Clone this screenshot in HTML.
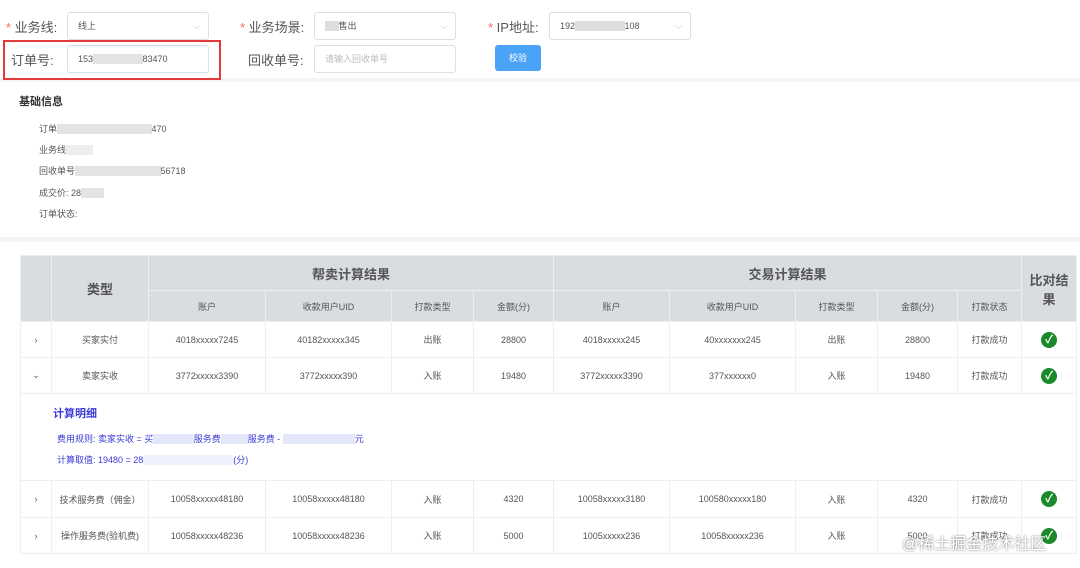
<!DOCTYPE html>
<html><head><meta charset="utf-8"><style>
body{margin:0;width:1080px;height:568px;background:#fff;font-family:"Liberation Sans","Noto Sans CJK SC",sans-serif;color:#444;position:relative;overflow:hidden}
.a{position:absolute;white-space:nowrap}
.lbl{font-size:13px;color:#555}
.inp{position:absolute;border:1px solid #dcdfe6;border-radius:3px;height:28px;box-sizing:border-box;font-size:9px;color:#555;line-height:26px;padding-left:10px}
.car{position:absolute;right:8px;top:0;color:#bbb;font-size:9px}
table{position:absolute;left:20px;top:255px;width:1056px;border-collapse:collapse;font-size:9px;color:#555;table-layout:fixed}
td,th{border:1px solid #eceef2;text-align:center;padding:0}
th{background:#d9dce0;font-weight:normal;color:#555}
.ok{display:inline-block;width:16px;height:16px;border-radius:50%;background:#1a8a2a;color:#fff;font-size:11px;line-height:16px;font-weight:bold}
.info{font-size:9px;color:#555}
.blue{color:#3b3bd6}
</style></head><body>
<div class="a lbl" style="left:6px;top:17px"><span style="color:#f56c6c">*</span> 业务线:</div>
<div class="inp" style="left:67px;top:12px;width:142px">线上<span class="car">⌵</span></div>
<div class="a lbl" style="left:240px;top:17px"><span style="color:#f56c6c">*</span> 业务场景:</div>
<div class="inp" style="left:314px;top:12px;width:142px"><span style="background:#ddd;color:#ddd">xxx</span>售出<span class="car">⌵</span></div>
<div class="a lbl" style="left:488px;top:17px"><span style="color:#f56c6c">*</span> IP地址:</div>
<div class="inp" style="left:549px;top:12px;width:142px">192<span style="background:#ddd;color:#ddd">xxxxxxxxxxx</span>108<span class="car">⌵</span></div>
<div class="a lbl" style="left:11px;top:50px">订单号:</div>
<div class="inp" style="left:67px;top:45px;width:142px">153<span style="background:#e3e3e3;color:#e3e3e3">xxxxxxxxxxx</span>83470</div>
<div class="a lbl" style="left:248px;top:50px">回收单号:</div>
<div class="inp" style="left:314px;top:45px;width:142px;color:#bbb">请输入回收单号</div>
<div class="a" style="left:495px;top:45px;width:46px;height:26px;background:#4aa3f7;border-radius:3px;color:#fff;font-size:9px;text-align:center;line-height:26px">校验</div>
<div class="a" style="left:0;top:78px;width:1080px;height:4px;background:#f3f4f6"></div>
<div class="a" style="left:3px;top:40px;width:218px;height:40px;border:2px solid #e03a3a;box-sizing:border-box"></div>
<div class="a" style="left:19px;top:93px;font-size:11px;font-weight:bold;color:#333">基础信息</div>
<div class="a info" style="left:39px;top:122px">订单<span style="background:#e3e3e3;color:#e3e3e3">xxxxxxxxxxxxxxxxxxxxx</span>470</div>
<div class="a info" style="left:39px;top:143px">业务线<span style="background:#eee;color:#eee">xxxxxx</span></div>
<div class="a info" style="left:39px;top:164px">回收单号<span style="background:#e3e3e3;color:#e3e3e3">xxxxxxxxxxxxxxxxxxx</span>56718</div>
<div class="a info" style="left:39px;top:186px">成交价: 28<span style="background:#e3e3e3;color:#e3e3e3">xxxxx</span></div>
<div class="a info" style="left:39px;top:207px">订单状态:</div>
<div class="a" style="left:0;top:237px;width:1080px;height:5px;background:#f3f4f6"></div>
<table>
<colgroup><col style="width:31px"><col style="width:97px"><col style="width:117px"><col style="width:126px"><col style="width:82px"><col style="width:80px"><col style="width:116px"><col style="width:126px"><col style="width:82px"><col style="width:80px"><col style="width:64px"><col style="width:55px"></colgroup>
<tr style="height:35px"><th rowspan="2"></th><th rowspan="2" style="font-size:13px;font-weight:bold">类型</th><th colspan="4" style="font-size:13px;font-weight:bold">帮卖计算结果</th><th colspan="5" style="font-size:13px;font-weight:bold">交易计算结果</th><th rowspan="2" style="font-size:13px;font-weight:bold">比对结<br>果</th></tr>
<tr style="height:31px"><th>账户</th><th>收款用户UID</th><th>打款类型</th><th>金额(分)</th><th>账户</th><th>收款用户UID</th><th>打款类型</th><th>金额(分)</th><th>打款状态</th></tr>
<tr style="height:36px"><td>›</td><td>买家实付</td><td>4018xxxxx7245</td><td>40182xxxxx345</td><td>出账</td><td>28800</td><td>4018xxxxx245</td><td>40xxxxxxx245</td><td>出账</td><td>28800</td><td>打款成功</td><td><span class="ok">✓</span></td></tr>
<tr style="height:36px"><td>⌄</td><td>卖家实收</td><td>3772xxxxx3390</td><td>3772xxxxx390</td><td>入账</td><td>19480</td><td>3772xxxxx3390</td><td>377xxxxxx0</td><td>入账</td><td>19480</td><td>打款成功</td><td><span class="ok">✓</span></td></tr>
<tr style="height:87px"><td colspan="12" style="text-align:left;vertical-align:top;position:relative">
<div class="a blue" style="left:32px;top:11px;font-size:11px;font-weight:bold">计算明细</div>
<div class="a blue" style="left:36px;top:38px">费用规则: 卖家实收 = 买<span style="background:#e4e6fa;color:#e4e6fa">xxxxxxxxx</span>服务费<span style="background:#e4e6fa;color:#e4e6fa">xxxxxx</span>服务费 - <span style="background:#e4e6fa;color:#e4e6fa">xxxxxxxxxxxxxxxx</span>元</div>
<div class="a blue" style="left:36px;top:59px">计算取值: 19480 = 28<span style="background:#eef0fb;color:#eef0fb">xxxxxxxxxxxxxxxxxxxx</span>(分)</div>
</td></tr>
<tr style="height:37px"><td>›</td><td>技术服务费（佣金）</td><td>10058xxxxx48180</td><td>10058xxxxx48180</td><td>入账</td><td>4320</td><td>10058xxxxx3180</td><td>100580xxxxx180</td><td>入账</td><td>4320</td><td>打款成功</td><td><span class="ok">✓</span></td></tr>
<tr style="height:36px"><td>›</td><td>操作服务费(验机费)</td><td>10058xxxxx48236</td><td>10058xxxxx48236</td><td>入账</td><td>5000</td><td>1005xxxxx236</td><td>10058xxxxx236</td><td>入账</td><td>5000</td><td>打款成功</td><td><span class="ok">✓</span></td></tr>
</table>
<div class="a" style="left:902px;top:530px;font-size:16px;color:#fff;text-shadow:0 0 2px #666">@稀土掘金技术社区</div>
</body></html>
